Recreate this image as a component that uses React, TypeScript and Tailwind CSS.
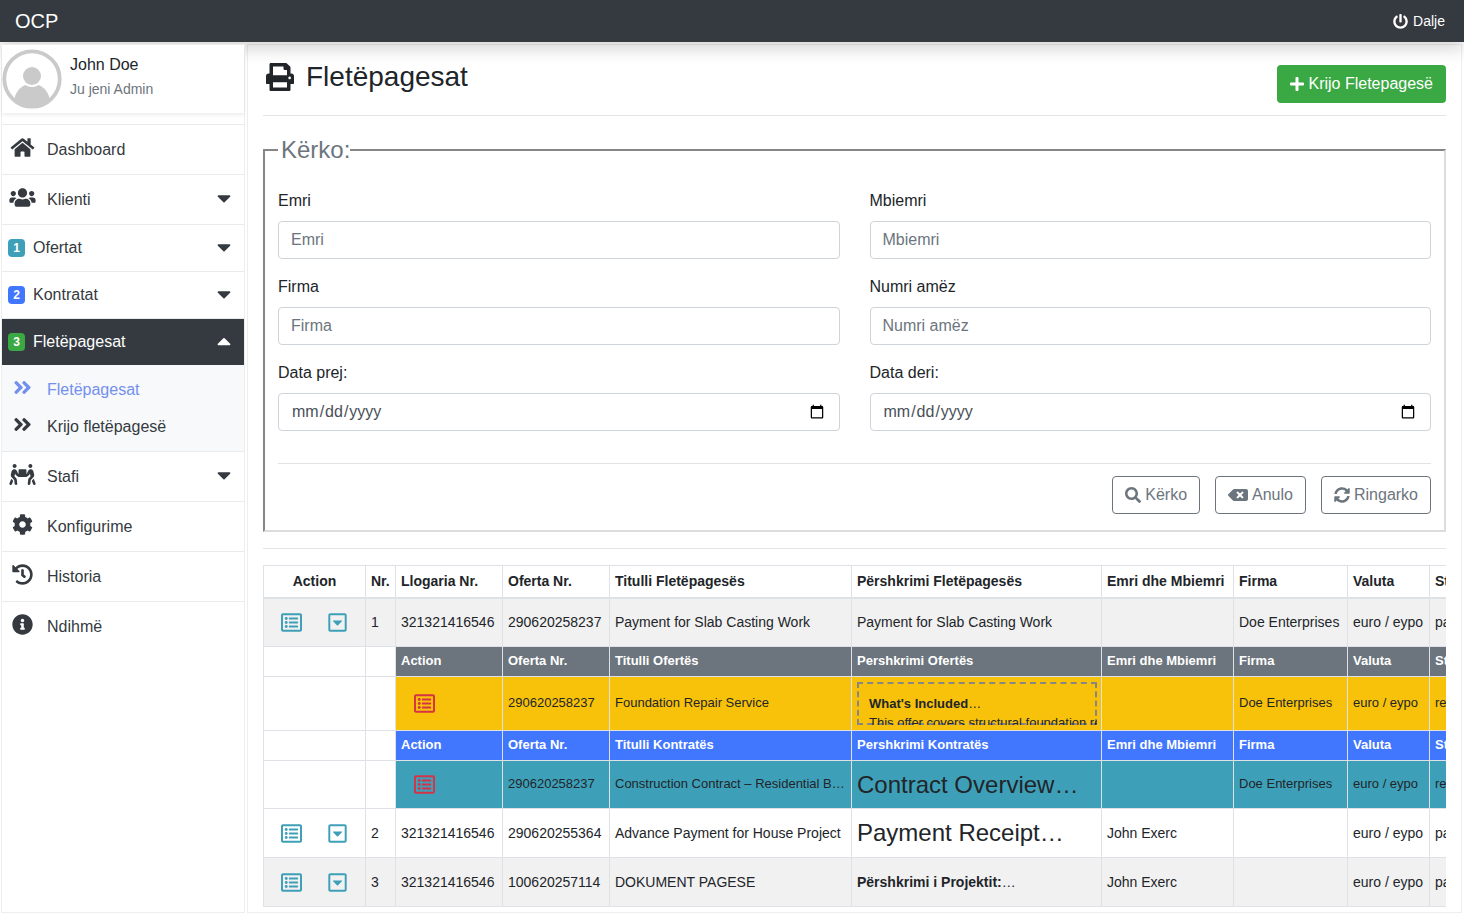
import React from "react";
import { IconType } from "react-icons";
import {
  FaAngleDoubleRight,
  FaBackspace,
  FaCaretDown,
  FaCaretUp,
  FaCog,
  FaHistory,
  FaHome,
  FaInfoCircle,
  FaPeopleCarry,
  FaPlus,
  FaPowerOff,
  FaRegCaretSquareDown,
  FaRegListAlt,
  FaSearch,
  FaSyncAlt,
  FaUsers,
} from "react-icons/fa";

interface MenuItemProps {
  label: string;
  icon?: IconType;
  badge?: string;
  badgeClass?: string;
  expandable?: boolean;
  open?: boolean;
}

const MenuItem: React.FC<MenuItemProps> = ({
  label,
  icon: Icon,
  badge,
  badgeClass,
  expandable,
  open,
}) => {
  const Caret = open ? FaCaretUp : FaCaretDown;
  return (
    <a
      href="#"
      className={`flex items-center border-t border-[#e9ecef] pr-[13px] ${
        badge ? "h-[47px] pl-[6px]" : "h-[50px] pl-[7px]"
      } ${open ? "bg-[#343a40] text-white" : "text-[#343a40]"}`}
    >
      {Icon && <Icon className="mb-1 mr-[11px] h-[21px] w-[27px]" />}
      {badge && (
        <span
          className={`mr-2 flex h-[18px] w-[17px] items-center justify-center rounded text-xs font-bold text-white ${badgeClass}`}
        >
          {badge}
        </span>
      )}
      <span className="flex-1">{label}</span>
      {expandable && <Caret className="mb-[3px] h-[22px] w-[14px]" />}
    </a>
  );
};

const SubItem: React.FC<{ label: string; active?: boolean }> = ({ label, active }) => (
  <a
    href="#"
    className={`flex h-[37px] items-center pl-[7px] ${
      active ? "text-[#7390ee]" : "text-[#343a40]"
    }`}
  >
    <FaAngleDoubleRight className="mb-1 mr-[11px] h-[21px] w-[27px]" />
    {label}
  </a>
);

const Avatar = () => (
  <svg viewBox="0 0 60 60" className="size-[60px] shrink-0" aria-hidden="true">
    <defs>
      <clipPath id="avatar-clip">
        <circle cx="30" cy="30" r="29" />
      </clipPath>
    </defs>
    <g clipPath="url(#avatar-clip)">
      <path d="M12 60V52C13 43 19 37 24 36H36C41 37 47 43 48 52V60Z" fill="#cacaca" />
      <circle cx="30" cy="27" r="11" fill="#fff" />
      <circle cx="30" cy="27" r="9" fill="#cacaca" />
    </g>
    <circle cx="30" cy="30" r="27.7" fill="none" stroke="#cacaca" strokeWidth="3.8" />
  </svg>
);

const PrintIcon = () => (
  <svg viewBox="0 0 512 512" fill="currentColor" className="size-7" aria-hidden="true">
    <path d="M464 192h-16V81.941a24 24 0 0 0-7.029-16.97L383.029 7.029A24 24 0 0 0 366.059 0H88C74.745 0 64 10.745 64 24v168H48c-26.51 0-48 21.49-48 48v132c0 6.627 5.373 12 12 12h52v104c0 13.255 10.745 24 24 24h336c13.255 0 24-10.745 24-24V384h52c6.627 0 12-5.373 12-12V240c0-26.51-21.49-48-48-48zm-80 256H128v-96h256v96zM128 224V64h192v40c0 13.2 10.8 24 24 24h40v96H128zm304 72c-13.254 0-24-10.746-24-24s10.746-24 24-24 24 10.746 24 24-10.746 24-24 24z" />
  </svg>
);

const Sidebar = () => (
  <aside className="relative z-20 ml-px w-[244px] shrink-0 border border-[#eeeeee] bg-white">
    <div className="flex h-[68px] items-center shadow-[0_2px_4px_rgba(0,0,0,0.08)]">
      <Avatar />
      <div className="ml-2 pb-1">
        <div className="leading-[25px] text-[#212529]">John Doe</div>
        <div className="text-sm leading-[25px] text-[#6c757d]">Ju jeni Admin</div>
      </div>
    </div>
    <nav className="mt-[11px]">
      <MenuItem label="Dashboard" icon={FaHome} />
      <MenuItem label="Klienti" icon={FaUsers} expandable />
      <MenuItem label="Ofertat" badge="1" badgeClass="bg-[#3ea0b8]" expandable />
      <MenuItem label="Kontratat" badge="2" badgeClass="bg-[#4176ff]" expandable />
      <MenuItem label="Fletëpagesat" badge="3" badgeClass="bg-[#3aa843]" expandable open />
      <div className="bg-[#f8f9fb] py-[6px]">
        <SubItem label="Fletëpagesat" active />
        <SubItem label="Krijo fletëpagesë" />
      </div>
      <MenuItem label="Stafi" icon={FaPeopleCarry} expandable />
      <MenuItem label="Konfigurime" icon={FaCog} />
      <MenuItem label="Historia" icon={FaHistory} />
      <MenuItem label="Ndihmë" icon={FaInfoCircle} />
    </nav>
  </aside>
);

interface FieldProps {
  id: string;
  label: string;
  type?: string;
}

const Field: React.FC<FieldProps> = ({ id, label, type = "text" }) => (
  <div>
    <label htmlFor={id} className="mb-2 block">
      {label}
    </label>
    <input
      id={id}
      type={type}
      placeholder={type === "text" ? label : undefined}
      className="block h-[38px] w-full rounded border border-[#ced4da] bg-white px-3 text-[#495057] placeholder:text-[#6c757d]"
    />
  </div>
);

interface OutlineButtonProps {
  label: string;
  icon: IconType;
  iconClass?: string;
}

const OutlineButton: React.FC<OutlineButtonProps> = ({
  label,
  icon: Icon,
  iconClass = "h-4 w-4",
}) => (
  <button
    type="button"
    className="flex h-[38px] items-center gap-1 rounded border border-[#6c757d] px-3 text-[#6c757d]"
  >
    <Icon className={iconClass} />
    {label}
  </button>
);

const SearchForm = () => (
  <fieldset className="border-2 border-b-[#dcdcdc] border-l-[#868686] border-r-[#dcdcdc] border-t-[#868686] px-[13px] pb-4">
    <legend className="pl-[3px] text-2xl leading-9 text-[#6c757d]">Kërko:</legend>
    <div className="mt-[21px] grid grid-cols-2 gap-x-[30px] gap-y-4">
      <Field id="emri" label="Emri" />
      <Field id="mbiemri" label="Mbiemri" />
      <Field id="firma" label="Firma" />
      <Field id="numri" label="Numri amëz" />
      <Field id="prej" label="Data prej:" type="date" />
      <Field id="deri" label="Data deri:" type="date" />
    </div>
    <hr className="mt-8 border-[#e3e3e3]" />
    <div className="mt-3 flex justify-end gap-[15px]">
      <OutlineButton label="Kërko" icon={FaSearch} />
      <OutlineButton label="Anulo" icon={FaBackspace} iconClass="h-4 w-5" />
      <OutlineButton label="Ringarko" icon={FaSyncAlt} />
    </div>
  </fieldset>
);

const cell = "border border-[#dee2e6] px-[5px] whitespace-nowrap";

interface Payment {
  nr: number;
  account: string;
  offer: string;
  title: string;
  description: React.ReactNode;
  name: string;
  company: string;
}

const PaymentRow: React.FC<{ payment: Payment; striped?: boolean }> = ({ payment, striped }) => (
  <tr className={striped ? "h-[49px] bg-[#f1f1f1]" : "h-[49px]"}>
    <td className={cell}>
      <div className="flex justify-center text-[#3ea0b8]">
        <button type="button" aria-label="Detajet" className="flex w-[46px] justify-center">
          <FaRegListAlt className="size-[21px]" />
        </button>
        <button type="button" aria-label="Zgjero" className="flex w-[46px] justify-center">
          <FaRegCaretSquareDown className="size-[21px]" />
        </button>
      </div>
    </td>
    <td className={cell}>{payment.nr}</td>
    <td className={cell}>{payment.account}</td>
    <td className={cell}>{payment.offer}</td>
    <td className={cell}>{payment.title}</td>
    <td className={cell}>{payment.description}</td>
    <td className={cell}>{payment.name}</td>
    <td className={cell}>{payment.company}</td>
    <td className={cell}>euro / eypo</td>
    <td className={cell}>paguar</td>
  </tr>
);

const NestedHead: React.FC<{ kind: string; className: string }> = ({ kind, className }) => {
  const head = `${cell} ${className} text-left text-[13px] font-bold text-white`;
  return (
    <tr className="h-[30px]">
      <td className={cell} />
      <td className={cell} />
      <th className={head}>Action</th>
      <th className={head}>Oferta Nr.</th>
      <th className={head}>Titulli {kind}</th>
      <th className={head}>Pershkrimi {kind}</th>
      <th className={head}>Emri dhe Mbiemri</th>
      <th className={head}>Firma</th>
      <th className={head}>Valuta</th>
      <th className={head}>Statusi</th>
    </tr>
  );
};

interface NestedRowProps {
  title: string;
  description: React.ReactNode;
  rowClass: string;
  className: string;
}

const NestedRow: React.FC<NestedRowProps> = ({ title, description, rowClass, className }) => {
  const data = `${cell} ${className} text-[13px]`;
  return (
    <tr className={rowClass}>
      <td className={cell} />
      <td className={cell} />
      <td className={data}>
        <button
          type="button"
          aria-label="Detajet"
          className="flex w-[46px] justify-center text-[#d63347]"
        >
          <FaRegListAlt className="size-[21px]" />
        </button>
      </td>
      <td className={data}>290620258237</td>
      <td className={data}>{title}</td>
      <td className={data}>{description}</td>
      <td className={data} />
      <td className={data}>Doe Enterprises</td>
      <td className={data}>euro / eypo</td>
      <td className={data}>realizuar</td>
    </tr>
  );
};

// The offer text is taller than its frame and gets cut at the outer edge
const OfferPreview = () => (
  <div className="h-[43px] w-60 overflow-hidden">
    <div className="h-[43px] border-2 border-dashed border-[#868686] p-[10px] leading-[19px]">
      <div>
        <b>What's Included</b>…
      </div>
      <div>This offer covers structural foundation repair</div>
    </div>
  </div>
);

const PaymentsTable = () => {
  const head = `${cell} border-b-2 text-left font-bold`;
  return (
    <div className="overflow-x-auto">
      <table className="w-[1256px] table-fixed border-collapse text-sm">
        <colgroup>
          <col className="w-[102px]" />
          <col className="w-[30px]" />
          <col className="w-[107px]" />
          <col className="w-[107px]" />
          <col className="w-[242px]" />
          <col className="w-[250px]" />
          <col className="w-[132px]" />
          <col className="w-[114px]" />
          <col className="w-[82px]" />
          <col className="w-[90px]" />
        </colgroup>
        <thead>
          <tr className="h-[32px]">
            <th className={`${cell} border-b-2 text-center font-bold`}>Action</th>
            <th className={head}>Nr.</th>
            <th className={head}>Llogaria Nr.</th>
            <th className={head}>Oferta Nr.</th>
            <th className={head}>Titulli Fletëpagesës</th>
            <th className={head}>Përshkrimi Fletëpagesës</th>
            <th className={head}>Emri dhe Mbiemri</th>
            <th className={head}>Firma</th>
            <th className={head}>Valuta</th>
            <th className={head}>Statusi</th>
          </tr>
        </thead>
        <tbody>
          <PaymentRow
            striped
            payment={{
              nr: 1,
              account: "321321416546",
              offer: "290620258237",
              title: "Payment for Slab Casting Work",
              description: "Payment for Slab Casting Work",
              name: "",
              company: "Doe Enterprises",
            }}
          />
          <NestedHead kind="Ofertës" className="bg-[#6c757d]" />
          <NestedRow
            rowClass="h-[54px]"
            className="bg-[#f9c20a]"
            title="Foundation Repair Service"
            description={<OfferPreview />}
          />
          <NestedHead kind="Kontratës" className="bg-[#4176ff]" />
          <NestedRow
            rowClass="h-[48px]"
            className="bg-[#3ea0b8]"
            title="Construction Contract – Residential B…"
            description={<span className="text-2xl">Contract Overview…</span>}
          />
          <PaymentRow
            payment={{
              nr: 2,
              account: "321321416546",
              offer: "290620255364",
              title: "Advance Payment for House Project",
              description: <span className="text-2xl">Payment Receipt…</span>,
              name: "John Exerc",
              company: "",
            }}
          />
          <PaymentRow
            striped
            payment={{
              nr: 3,
              account: "321321416546",
              offer: "100620257114",
              title: "DOKUMENT PAGESE",
              description: (
                <>
                  <b>Përshkrimi i Projektit:</b>…
                </>
              ),
              name: "John Exerc",
              company: "",
            }}
          />
        </tbody>
      </table>
    </div>
  );
};

const App = () => {
  return (
    <div className="flex min-h-screen flex-col bg-white font-['Liberation_Sans',Arial,sans-serif] text-base text-[#212529]">
      <header className="relative z-10 flex h-[42px] items-center justify-between bg-[#343a40] pl-[15px] pr-[19px] text-white shadow-[0_8px_16px_rgba(0,0,0,0.15)]">
        <a href="#" className="text-xl">
          OCP
        </a>
        <a href="#" className="flex items-center gap-[5px] text-sm">
          <FaPowerOff className="size-[15px]" />
          Dalje
        </a>
      </header>

      <div className="flex flex-1 pt-[2px]">
        <Sidebar />
        <main className="ml-[2px] mr-[2px] min-w-0 flex-1 border border-[#eeeeee] px-[15px]">
          <div className="flex items-end justify-between border-b border-[#e3e3e3] pb-3 pt-[18px]">
            <h1 className="flex items-center gap-3 self-start pl-[3px] text-[28px] leading-7">
              <PrintIcon />
              Fletëpagesat
            </h1>
            <button
              type="button"
              className="mt-[2px] flex h-[38px] items-center gap-1 rounded bg-[#3aa843] px-[13px] text-white"
            >
              <FaPlus className="h-4 w-[14px]" />
              Krijo Fletepagesë
            </button>
          </div>
          <div className="mt-4">
            <SearchForm />
          </div>
          <hr className="my-4 border-[#e3e3e3]" />
          <PaymentsTable />
        </main>
      </div>
    </div>
  );
};

export default App;
